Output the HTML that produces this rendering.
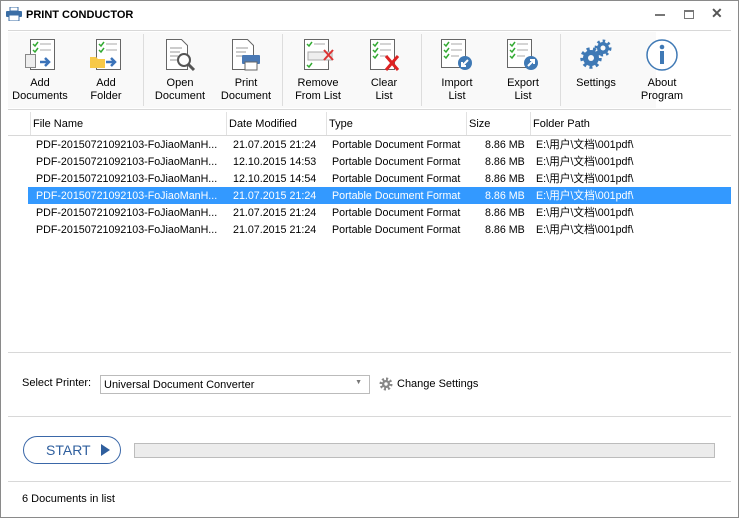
<!DOCTYPE html>
<html><head><meta charset="utf-8"><style>
*{margin:0;padding:0;box-sizing:border-box}
body{width:739px;height:518px;background:#fff;font-family:"Liberation Sans","Noto Sans CJK SC",sans-serif;font-size:11px;color:#000;position:relative;overflow:hidden}
.frame{position:absolute;left:0;top:0;width:739px;height:518px;border:1px solid #8a8a8a}
.abs{position:absolute}
.title{left:26px;top:9px;font-weight:bold;font-size:11px}
.tb{position:absolute;top:32px;height:76px;background:#f9f9f9}
.btn{position:absolute;top:0;width:66px;text-align:center;line-height:13px}
.btn svg{display:block;margin:6px auto 5px}
.sep{position:absolute;top:2px;width:1px;height:72px;background:#ddd}
.hl{position:absolute;left:8px;right:8px;height:1px;background:#d8d8d8}
.hd{position:absolute;top:118px}
.vl{position:absolute;top:112px;width:1px;height:23px;background:#e2e2e2}
.row{position:absolute;left:28px;width:703px;height:17px;line-height:17px;font-size:10.7px}
.row span{position:absolute;white-space:nowrap;top:1px}
.sel{background:#3399ff;color:#fff}
</style></head><body>
<div class="frame"></div>
<svg class="abs" style="left:6px;top:7px" width="16" height="14" viewBox="0 0 16 14"><rect x="4" y="0" width="8" height="4" fill="#fff" stroke="#3b6ea5"/><rect x="0" y="4" width="16" height="6" rx="1" fill="#3b6ea5"/><rect x="3" y="8" width="10" height="6" fill="#fff" stroke="#3b6ea5"/></svg>
<div class="abs title">PRINT CONDUCTOR</div>
<div class="abs" style="left:655px;top:14px;width:10px;height:2px;background:#777"></div>
<div class="abs" style="left:684px;top:10px;width:10px;height:9px;border:1px solid #777;border-top-width:2px"></div>
<div class="abs" style="left:711px;top:5px;font-size:14px;color:#555;font-weight:bold">✕</div>
<div class="hl" style="top:30px"></div>
<div class="tb" style="left:8px;width:648px"></div>
<div class="sep" style="left:143px;top:34px"></div>
<div class="sep" style="left:282px;top:34px"></div>
<div class="sep" style="left:421px;top:34px"></div>
<div class="sep" style="left:560px;top:34px"></div>

<div class="btn" style="left:7px;top:32px"><svg width="32" height="34" viewBox="0 0 32 34"><rect x="6.5" y="1.5" width="24" height="30" fill="#fff" stroke="#666"/><path d="M9 6l2 2 3-4M9 12l2 2 3-4" stroke="#3a3" fill="none" stroke-width="1.5"/><path d="M16 6h11M16 12h11" stroke="#aaa"/><rect x="1.5" y="16.5" width="10" height="13" fill="#eee" stroke="#888"/><path d="M16 24h8M21 20l4 4-4 4" stroke="#3b73b9" stroke-width="2.5" fill="none"/></svg>Add<br>Documents</div>
<div class="btn" style="left:73px;top:32px"><svg width="32" height="34" viewBox="0 0 32 34"><rect x="6.5" y="1.5" width="24" height="30" fill="#fff" stroke="#666"/><path d="M9 6l2 2 3-4M9 12l2 2 3-4" stroke="#3a3" fill="none" stroke-width="1.5"/><path d="M16 6h11M16 12h11" stroke="#aaa"/><path d="M0 19h6l2 2h7v9H0z" fill="#f7c948"/><path d="M16 24h8M21 20l4 4-4 4" stroke="#3b73b9" stroke-width="2.5" fill="none"/></svg>Add<br>Folder</div>
<div class="btn" style="left:147px;top:32px"><svg width="32" height="34" viewBox="0 0 32 34"><path d="M2.5 1.5h15l6 6v24h-21z" fill="#fff" stroke="#666"/><path d="M6 10h12M6 14h10M6 18h8M6 22h8" stroke="#999"/><circle cx="20" cy="22" r="6" fill="#fff" stroke="#555" stroke-width="2"/><path d="M24 26l6 6" stroke="#555" stroke-width="3"/></svg>Open<br>Document</div>
<div class="btn" style="left:213px;top:32px"><svg width="32" height="34" viewBox="0 0 32 34"><path d="M2.5 1.5h15l6 6v24h-21z" fill="#fff" stroke="#666"/><path d="M6 10h12M6 14h10M6 18h8" stroke="#999"/><rect x="12" y="17" width="18" height="9" rx="1" fill="#4a79b5"/><rect x="15" y="24" width="12" height="8" fill="#fff" stroke="#666"/></svg>Print<br>Document</div>
<div class="btn" style="left:285px;top:32px"><svg width="34" height="34" viewBox="0 0 34 34"><rect x="3.5" y="1.5" width="24" height="30" fill="#fff" stroke="#666"/><path d="M6 6l2 2 3-4M6 27l2 2 3-4" stroke="#3a3" fill="none" stroke-width="1.5"/><path d="M13 6h11" stroke="#aaa"/><rect x="7" y="14" width="24" height="8" fill="#eee" stroke="#aaa"/><path d="M23 12l9 10M32 12l-9 10" stroke="#d33" stroke-width="2"/></svg>Remove<br>From List</div>
<div class="btn" style="left:351px;top:32px"><svg width="34" height="34" viewBox="0 0 34 34"><rect x="3.5" y="1.5" width="24" height="30" fill="#fff" stroke="#666"/><path d="M6 6l2 2 3-4M6 12l2 2 3-4M6 18l2 2 3-4" stroke="#3a3" fill="none" stroke-width="1.5"/><path d="M13 6h11M13 12h11M13 18h8" stroke="#aaa"/><path d="M19 18l12 14M31 18l-12 14" stroke="#d22" stroke-width="3"/></svg>Clear<br>List</div>
<div class="btn" style="left:424px;top:32px"><svg width="34" height="34" viewBox="0 0 34 34"><rect x="1.5" y="1.5" width="24" height="28" fill="#fff" stroke="#666"/><path d="M4 6l2 2 3-4M4 12l2 2 3-4M4 18l2 2 3-4" stroke="#3a3" fill="none" stroke-width="1.5"/><path d="M11 6h11M11 12h11M11 18h8" stroke="#aaa"/><circle cx="25" cy="25" r="7" fill="#3f79b5"/><path d="M28 22l-6 6M22 24v4h4" stroke="#fff" stroke-width="2" fill="none"/></svg>Import<br>List</div>
<div class="btn" style="left:490px;top:32px"><svg width="34" height="34" viewBox="0 0 34 34"><rect x="1.5" y="1.5" width="24" height="28" fill="#fff" stroke="#666"/><path d="M4 6l2 2 3-4M4 12l2 2 3-4M4 18l2 2 3-4" stroke="#3a3" fill="none" stroke-width="1.5"/><path d="M11 6h11M11 12h11M11 18h8" stroke="#aaa"/><circle cx="25" cy="25" r="7" fill="#3f79b5"/><path d="M22 28l6-6M24 22h4v4" stroke="#fff" stroke-width="2" fill="none"/></svg>Export<br>List</div>
<div class="btn" style="left:563px;top:32px"><svg width="34" height="34" viewBox="0 0 34 34"><g fill="#3f79b5"><circle cx="12" cy="20" r="8"/><circle cx="24" cy="10" r="6"/><g stroke="#3f79b5" stroke-width="3.5" stroke-dasharray="3 3.3"><circle cx="12" cy="20" r="9" fill="none"/><circle cx="24" cy="10" r="7" fill="none" stroke-width="3" stroke-dasharray="2.5 2.9"/></g></g><circle cx="12" cy="20" r="3" fill="#f9f9f9"/><circle cx="24" cy="10" r="2.5" fill="#f9f9f9"/></svg>Settings</div>
<div class="btn" style="left:629px;top:32px"><svg width="34" height="34" viewBox="0 0 34 34"><circle cx="17" cy="17" r="15" fill="#fff" stroke="#3f79b5" stroke-width="1.5"/><circle cx="17" cy="9" r="2.3" fill="#3f79b5"/><rect x="15" y="13" width="4" height="13" fill="#3f79b5"/></svg>About<br>Program</div>

<div class="hl" style="top:109px"></div>
<div class="vl" style="left:30px"></div><div class="vl" style="left:226px"></div><div class="vl" style="left:326px"></div><div class="vl" style="left:466px"></div><div class="vl" style="left:530px"></div>
<div class="hd" style="left:33px">File Name</div>
<div class="hd" style="left:229px">Date Modified</div>
<div class="hd" style="left:329px">Type</div>
<div class="hd" style="left:469px">Size</div>
<div class="hd" style="left:533px">Folder Path</div>
<div class="hl" style="top:135px"></div>

<div class="row" style="top:136px"><span style="left:8px">PDF-20150721092103-FoJiaoManH...</span><span style="left:205px">21.07.2015 21:24</span><span style="left:304px">Portable Document Format</span><span style="left:457px">8.86 MB</span><span style="left:508px">E:\用户\文档\001pdf\</span></div>
<div class="row" style="top:153px"><span style="left:8px">PDF-20150721092103-FoJiaoManH...</span><span style="left:205px">12.10.2015 14:53</span><span style="left:304px">Portable Document Format</span><span style="left:457px">8.86 MB</span><span style="left:508px">E:\用户\文档\001pdf\</span></div>
<div class="row" style="top:170px"><span style="left:8px">PDF-20150721092103-FoJiaoManH...</span><span style="left:205px">12.10.2015 14:54</span><span style="left:304px">Portable Document Format</span><span style="left:457px">8.86 MB</span><span style="left:508px">E:\用户\文档\001pdf\</span></div>
<div class="row sel" style="top:187px"><span style="left:8px">PDF-20150721092103-FoJiaoManH...</span><span style="left:205px">21.07.2015 21:24</span><span style="left:304px">Portable Document Format</span><span style="left:457px">8.86 MB</span><span style="left:508px">E:\用户\文档\001pdf\</span></div>
<div class="row" style="top:204px"><span style="left:8px">PDF-20150721092103-FoJiaoManH...</span><span style="left:205px">21.07.2015 21:24</span><span style="left:304px">Portable Document Format</span><span style="left:457px">8.86 MB</span><span style="left:508px">E:\用户\文档\001pdf\</span></div>
<div class="row" style="top:221px"><span style="left:8px">PDF-20150721092103-FoJiaoManH...</span><span style="left:205px">21.07.2015 21:24</span><span style="left:304px">Portable Document Format</span><span style="left:457px">8.86 MB</span><span style="left:508px">E:\用户\文档\001pdf\</span></div>

<div class="hl" style="top:352px"></div>
<div class="abs" style="left:22px;top:377px">Select Printer:</div>
<div class="abs" style="left:100px;top:375px;width:270px;height:19px;border:1px solid #bbb;padding:3px 0 0 3px">Universal Document Converter<span style="position:absolute;right:7px;top:3px;font-size:7px;color:#777">▼</span></div>
<svg class="abs" style="left:379px;top:377px" width="14" height="14" viewBox="0 0 14 14"><circle cx="7" cy="7" r="5" fill="none" stroke="#888" stroke-width="3" stroke-dasharray="2 1.9"/><circle cx="7" cy="7" r="4" fill="#888"/><circle cx="7" cy="7" r="1.7" fill="#fff"/></svg>
<div class="abs" style="left:397px;top:378px">Change Settings</div>
<div class="hl" style="top:416px"></div>
<div class="abs" style="left:23px;top:436px;width:98px;height:28px;border:1px solid #3a67a8;border-radius:14px;color:#2f5f9e;font-size:14px;padding:5px 0 0 22px">START<span style="position:absolute;left:77px;top:7px;width:0;height:0;border-left:9px solid #2f5f9e;border-top:6px solid transparent;border-bottom:6px solid transparent"></span></div>
<div class="abs" style="left:134px;top:443px;width:581px;height:15px;background:#ececec;border:1px solid #bcbcbc"></div>
<div class="hl" style="top:481px"></div>
<div class="abs" style="left:22px;top:493px">6 Documents in list</div>
</body></html>
